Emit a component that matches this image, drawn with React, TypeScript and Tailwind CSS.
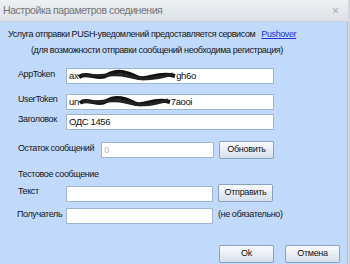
import React from "react";

const inputCls =
  "h-[16px] bg-white border border-[#9fb5d2] px-[2px] text-[9.5px] leading-[14px] text-[#111] flex items-center overflow-hidden whitespace-nowrap";
const btnCls =
  "h-[18px] w-[55px] rounded-[2px] border border-[#8aa2c1] bg-gradient-to-b from-[#fbfcfe] via-[#e9eef5] to-[#d6dfeb] text-[9px] tracking-[-0.3px] text-[#111] flex items-center justify-center whitespace-nowrap";

function Scribble({ w }: { w: number }) {
  return (
    <svg width={w} height="14" viewBox={`0 0 ${w} 14`} className="shrink-0">
      <path
        d={`M1 8 C ${w * 0.1} 2, ${w * 0.2} 12, ${w * 0.3} 6 S ${w * 0.5} 3, ${w * 0.6} 8 S ${w * 0.8} 2, ${w - 1} 7`}
        stroke="#111"
        strokeWidth="4"
        fill="none"
      />
      <path
        d={`M3 6 C ${w * 0.2} 9, ${w * 0.35} 3, ${w * 0.5} 7 S ${w * 0.75} 11, ${w - 3} 5`}
        stroke="#222"
        strokeWidth="3"
        fill="none"
      />
    </svg>
  );
}

export default function App() {
  return (
    <div
      className="w-[350px] h-[264px] flex flex-col overflow-hidden bg-[#d3d7dd] whitespace-nowrap"
      style={{ fontFamily: '"Liberation Sans", Arial, sans-serif' }}
    >
      <div className="h-[22px] shrink-0 flex items-center justify-between pl-[3px] pr-[9px] bg-gradient-to-b from-[#eef0f3] to-[#dde1e6] border-b border-[#c9cfd7] mr-[2px]">
        <span className="text-[10.5px] tracking-[-0.45px] text-[#6f757b]">Настройка параметров соединения</span>
        <span className="text-[12px] text-[#a3a9af]">×</span>
      </div>
      <div className="flex-1 bg-[#c1dafc] border-r border-[#a8bcd6] mr-[2px] flex flex-col text-[9px] tracking-[-0.4px] text-[#141414] pt-[4px]">
        <div className="leading-[16px] pl-[8px] flex">
          <span>Услуга отправки PUSH-уведомлений предоставляется сервисом</span>
          <span className="text-[#1d33e0] underline ml-[6px]">Pushover</span>
        </div>
        <div className="leading-[16px] pl-[31px]">
          (для возможности отправки сообщений необходима регистрация)
        </div>

        <div className="flex mt-[10px] pl-[18px]">
          <div className="w-[48px] leading-[12px]">AppToken</div>
          <div className={inputCls + " w-[208px]"}>
            <span>ax</span>
            <Scribble w={98} />
            <span>gh6o</span>
          </div>
        </div>

        <div className="flex mt-[10px] pl-[18px]">
          <div className="w-[48px] leading-[10px]">UserToken</div>
          <div className={inputCls + " w-[208px]"}>
            <span>un</span>
            <Scribble w={92} />
            <span>7aooi</span>
          </div>
        </div>

        <div className="flex mt-[4px] pl-[18px]">
          <div className="w-[48px] leading-[10px]">Заголовок</div>
          <div className={inputCls + " w-[208px]"}>ОДС 1456</div>
        </div>

        <div className="flex items-start mt-[11px] pl-[18px]">
          <div className="w-[83px] leading-[12px] pt-[1px]">Остаток сообщений</div>
          <div className={inputCls + " w-[113px] mt-[1px] text-[#b8bec6]"}>0</div>
          <button className={btnCls + " ml-[5px]"}>Обновить</button>
        </div>

        <div className="mt-[9px] pl-[18px] leading-[12px]">Тестовое сообщение</div>

        <div className="flex items-start mt-[4px] pl-[18px]">
          <div className="w-[48px] leading-[12px] pt-[1px]">Текст</div>
          <div className={inputCls + " w-[147px] mt-[2px]"}></div>
          <button className={btnCls + " ml-[5px]"}>Отправить</button>
        </div>

        <div className="flex items-start mt-[6px] pl-[17px]">
          <div className="w-[49px] leading-[12px]">Получатель</div>
          <div className={inputCls + " w-[147px]"}></div>
          <div className="ml-[5px] leading-[12px]">(не обязательно)</div>
        </div>

        <div className="flex mt-[21px] pl-[219px] gap-[11px]">
          <button className={btnCls}>Ok</button>
          <button className={btnCls}>Отмена</button>
        </div>
      </div>
    </div>
  );
}
